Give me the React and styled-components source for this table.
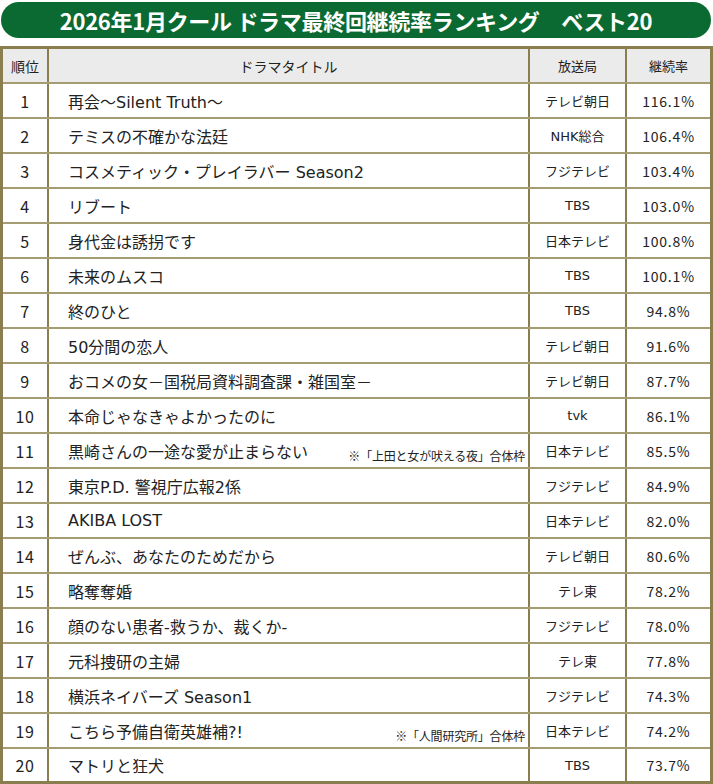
import React from "react";
import styled, { createGlobalStyle } from "styled-components";

const GlobalStyle = createGlobalStyle`
  html, body {
    margin: 0;
    padding: 0;
    background: #ffffff;
  }
  body {
    font-family: "Noto Sans CJK JP", "Noto Sans", sans-serif;
    color: #222222;
  }
`;

const Page = styled.div`
  width: 713px;
  height: 784px;
  overflow: hidden;
  display: flex;
  flex-direction: column;
`;

const TitleBar = styled.h1`
  margin: 2px 2px 0 1px;
  height: 36px;
  border-radius: 18px;
  background: #0b6a31;
  color: #ffffff;
  font-family: "Noto Sans CJK JP", sans-serif;
  font-weight: 700;
  font-size: 22px;
  letter-spacing: -0.3px;
  line-height: 36px;
  text-align: center;
  white-space: pre;
`;

const Table = styled.div`
  margin-top: 8px;
  border: 3px solid #8a7e4f;
  border-bottom: none;
  display: flex;
  flex-direction: column;
`;

const Row = styled.div`
  display: grid;
  grid-template-columns: 44px 481px 97px 85px;
  height: 35px;
  box-sizing: border-box;
  border-bottom: ${(p) => (p.$last ? "3px solid #8a7e4f" : "2px solid #a69c72")};
  background: ${(p) => (p.$head ? "#ebebeb" : "#ffffff")};
`;

const Cell = styled.div`
  box-sizing: border-box;
  display: flex;
  align-items: center;
  justify-content: ${(p) => (p.$left ? "space-between" : "center")};
  padding-left: ${(p) => (p.$left ? "19px" : "0")};
  padding-right: ${(p) => (p.$left ? "3px" : "0")};
  border-left: ${(p) => (p.$first ? "none" : "2px solid #8a7e4f")};
  font-family: ${(p) =>
    p.$latin
      ? '"DejaVu Sans", "Noto Sans CJK JP", sans-serif'
      : '"Noto Sans CJK JP", "Noto Sans", sans-serif'};
  font-size: ${(p) => p.$size || 16}px;
  letter-spacing: ${(p) => p.$spacing || 0}px;
  white-space: nowrap;
  overflow: hidden;
`;

const Note = styled.span`
  align-self: flex-end;
  margin-bottom: 3px;
  font-family: "Noto Sans CJK JP", sans-serif;
  font-size: 12px;
  letter-spacing: -0.2px;
  color: #222222;
`;

const rows = [
  ["再会～Silent Truth～", "テレビ朝日", "116.1%"],
  ["テミスの不確かな法廷", "NHK総合", "106.4%"],
  ["コスメティック・プレイラバー Season2", "フジテレビ", "103.4%"],
  ["リブート", "TBS", "103.0%"],
  ["身代金は誘拐です", "日本テレビ", "100.8%"],
  ["未来のムスコ", "TBS", "100.1%"],
  ["終のひと", "TBS", "94.8%"],
  ["50分間の恋人", "テレビ朝日", "91.6%"],
  ["おコメの女－国税局資料調査課・雑国室－", "テレビ朝日", "87.7%"],
  ["本命じゃなきゃよかったのに", "tvk", "86.1%"],
  ["黒崎さんの一途な愛が止まらない", "日本テレビ", "85.5%", "※「上田と女が吠える夜」合体枠"],
  ["東京P.D. 警視庁広報2係", "フジテレビ", "84.9%"],
  ["AKIBA LOST", "日本テレビ", "82.0%"],
  ["ぜんぶ、あなたのためだから", "テレビ朝日", "80.6%"],
  ["略奪奪婚", "テレ東", "78.2%"],
  ["顔のない患者-救うか、裁くか-", "フジテレビ", "78.0%"],
  ["元科捜研の主婦", "テレ東", "77.8%"],
  ["横浜ネイバーズ Season1", "フジテレビ", "74.3%"],
  ["こちら予備自衛英雄補?!", "日本テレビ", "74.2%", "※「人間研究所」合体枠"],
  ["マトリと狂犬", "TBS", "73.7%"],
];

export default function App() {
  return (
    <Page>
      <GlobalStyle />
      <TitleBar>{"2026年1月クール ドラマ最終回継続率ランキング　ベスト20"}</TitleBar>
      <Table>
        <Row $head>
          <Cell $first $size={14}>順位</Cell>
          <Cell $size={14}>ドラマタイトル</Cell>
          <Cell $size={13}>放送局</Cell>
          <Cell $size={13}>継続率</Cell>
        </Row>
        {rows.map(([title, station, rate, note], i) => (
          <Row key={i} $last={i === rows.length - 1}>
            <Cell $first $size={16} $spacing={0.5}>{i + 1}</Cell>
            <Cell $left $latin $size={16}>
              <span>{title}</span>
              {note && <Note>{note}</Note>}
            </Cell>
            <Cell $latin $size={13}>{station}</Cell>
            <Cell $size={14} $spacing={0.8}>{rate}</Cell>
          </Row>
        ))}
      </Table>
    </Page>
  );
}
